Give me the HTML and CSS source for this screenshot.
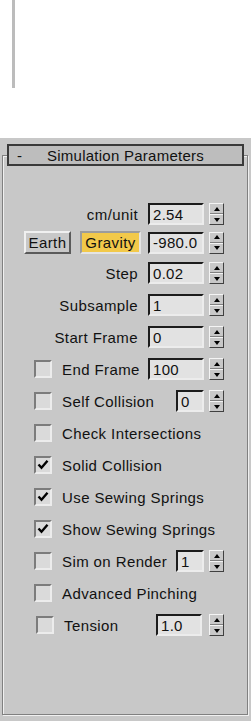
FILE: index.html
```html
<!DOCTYPE html>
<html lang="en">
<head>
    <meta charset="UTF-8">
    <meta name="viewport" content="width=device-width, initial-scale=1.0">
    <title>Simulation Parameters</title>
    <link rel="stylesheet" href="styles.css">
</head>
<body>
    <div class="top">
        <div class="scroll-bar"></div>
    </div>

    <div class="panel">
        <div class="rollout-title">
            <span class="minus">-</span>
            <span class="title">Simulation Parameters</span>
        </div>

        <div class="rollout">
            <div class="row field first">
                <span class="label">cm/unit</span>
                <input class="num" type="text" value="2.54">
                <div class="spin"><span class="up"></span><span class="down"></span></div>
            </div>
            <div class="row field earth-row">
                <button class="btn earth">Earth</button>
                <button class="btn gravity">Gravity</button>
                <input class="num" type="text" value="-980.0">
                <div class="spin"><span class="up"></span><span class="down"></span></div>
            </div>
            <div class="row field step-row">
                <span class="label">Step</span>
                <input class="num" type="text" value="0.02">
                <div class="spin"><span class="up"></span><span class="down"></span></div>
            </div>
            <div class="row field">
                <span class="label">Subsample</span>
                <input class="num" type="text" value="1">
                <div class="spin"><span class="up"></span><span class="down"></span></div>
            </div>
            <div class="row field">
                <span class="label">Start Frame</span>
                <input class="num" type="text" value="0">
                <div class="spin"><span class="up"></span><span class="down"></span></div>
            </div>
            <div class="row option">
                <span class="check"></span>
                <span class="label">End Frame</span>
                <input class="num" type="text" value="100">
                <div class="spin"><span class="up"></span><span class="down"></span></div>
            </div>
            <div class="row option">
                <span class="check"></span>
                <span class="label">Self Collision</span>
                <input class="num small" type="text" value="0">
                <div class="spin"><span class="up"></span><span class="down"></span></div>
            </div>
            <div class="row option">
                <span class="check"></span>
                <span class="label">Check Intersections</span>
            </div>
            <div class="row option">
                <span class="check checked">
                    <svg width="14" height="14" viewBox="0 0 14 14"><polyline points="2.5,6.5 5.5,9.8 11.5,2.8" fill="none" stroke="#000" stroke-width="2.4"/></svg>
                </span>
                <span class="label">Solid Collision</span>
            </div>
            <div class="row option">
                <span class="check checked">
                    <svg width="14" height="14" viewBox="0 0 14 14"><polyline points="2.5,6.5 5.5,9.8 11.5,2.8" fill="none" stroke="#000" stroke-width="2.4"/></svg>
                </span>
                <span class="label">Use Sewing Springs</span>
            </div>
            <div class="row option">
                <span class="check checked">
                    <svg width="14" height="14" viewBox="0 0 14 14"><polyline points="2.5,6.5 5.5,9.8 11.5,2.8" fill="none" stroke="#000" stroke-width="2.4"/></svg>
                </span>
                <span class="label">Show Sewing Springs</span>
            </div>
            <div class="row option">
                <span class="check"></span>
                <span class="label">Sim on Render</span>
                <input class="num small" type="text" value="1">
                <div class="spin"><span class="up"></span><span class="down"></span></div>
            </div>
            <div class="row option">
                <span class="check"></span>
                <span class="label">Advanced Pinching</span>
            </div>
            <div class="row option tension">
                <span class="check"></span>
                <span class="label">Tension</span>
                <input class="num mid" type="text" value="1.0">
                <div class="spin"><span class="up"></span><span class="down"></span></div>
            </div>
        </div>
    </div>
</body>
</html>
```

FILE: styles.css
```css
* {
    box-sizing: border-box;
    margin: 0;
    padding: 0;
}

body {
    font-family: 'Liberation Sans', Arial, sans-serif;
    font-size: 15px;
    color: #111;
    background: #fff;
    width: 251px;
    height: 721px;
    overflow: hidden;
}

.top {
    height: 138px;
    padding-left: 12px;
}

.scroll-bar {
    width: 3px;
    height: 88px;
    background: #bcbcbc;
}

.panel {
    height: 583px;
    background: #c8c8c8;
    padding: 6px 0 0 2px;
}

.rollout-title {
    position: relative;
    z-index: 1;
    display: flex;
    align-items: center;
    width: 237px;
    height: 22px;
    margin-left: 5px;
    background: #bdbdbd;
    border: 2px solid #3a3a3a;
}

.minus {
    width: 30px;
    padding-left: 8px;
}

.title {
    flex: 1;
    padding-right: 30px;
    text-align: center;
    letter-spacing: 0.25px;
}

.rollout {
    width: 246px;
    height: 560px;
    margin-top: -11px;
    border: 1px solid #808080;
    box-shadow: inset 1px 1px 0 #f0f0f0, 1px 1px 0 #f0f0f0;
    padding: 44px 23px 0 0;
}

.row {
    display: flex;
    align-items: center;
    height: 32px;
}

.row.first {
    height: 28px;
}

.row.earth-row {
    height: 29px;
}

.field {
    justify-content: flex-end;
}

.label {
    letter-spacing: 0.4px;
    white-space: nowrap;
}

.field .label {
    margin-right: 10px;
}

.option {
    padding-left: 31px;
}

.option .check {
    margin-right: 10px;
}

.option .num {
    margin-left: auto;
}

.tension {
    padding-left: 33px;
}

.check {
    display: flex;
    align-items: center;
    justify-content: center;
    width: 18px;
    height: 18px;
    flex: none;
    background: #dadada;
    border: 2px solid;
    border-color: #7c7c7c #ececec #ececec #7c7c7c;
}

.num {
    width: 56px;
    height: 22px;
    flex: none;
    font-family: 'Liberation Sans', Arial, sans-serif;
    font-size: 15px;
    letter-spacing: 0.3px;
    color: #111;
    padding: 0 3px;
    background: #e2e2e2;
    border: 2px solid;
    border-color: #1c1c1c #ececec #ececec #1c1c1c;
    outline: none;
}

.num.small {
    width: 28px;
}

.num.mid {
    width: 46px;
}

.tension .num {
    margin-right: 2px;
}

.spin {
    display: flex;
    flex-direction: column;
    width: 15px;
    height: 22px;
    flex: none;
    margin-left: 5px;
    border: 1px solid;
    border-color: #f4f4f4 #404040 #404040 #f4f4f4;
    background: #c8c8c8;
}

.spin span {
    flex: 1;
    display: flex;
    align-items: center;
    justify-content: center;
}

.spin .up {
    border-bottom: 1px solid #808080;
}

.spin .down {
    border-top: 1px solid #f4f4f4;
}

.spin .up::after {
    content: "";
    border-left: 3px solid transparent;
    border-right: 3px solid transparent;
    border-bottom: 4px solid #000;
}

.spin .down::after {
    content: "";
    border-left: 3px solid transparent;
    border-right: 3px solid transparent;
    border-top: 4px solid #000;
}

.btn {
    height: 23px;
    font-family: 'Liberation Sans', Arial, sans-serif;
    font-size: 15px;
    letter-spacing: 0.4px;
    color: #111;
    cursor: pointer;
}

.earth {
    width: 47px;
    margin-right: 9px;
    background: #c8c8c8;
    border: 2px solid;
    border-color: #f0f0f0 #5a5a5a #5a5a5a #f0f0f0;
}

.gravity {
    width: 61px;
    margin-right: 7px;
    background: #f2c94a;
    border: 2px solid;
    border-color: #9c9c9c #e4e4e4 #e4e4e4 #9c9c9c;
}
```
